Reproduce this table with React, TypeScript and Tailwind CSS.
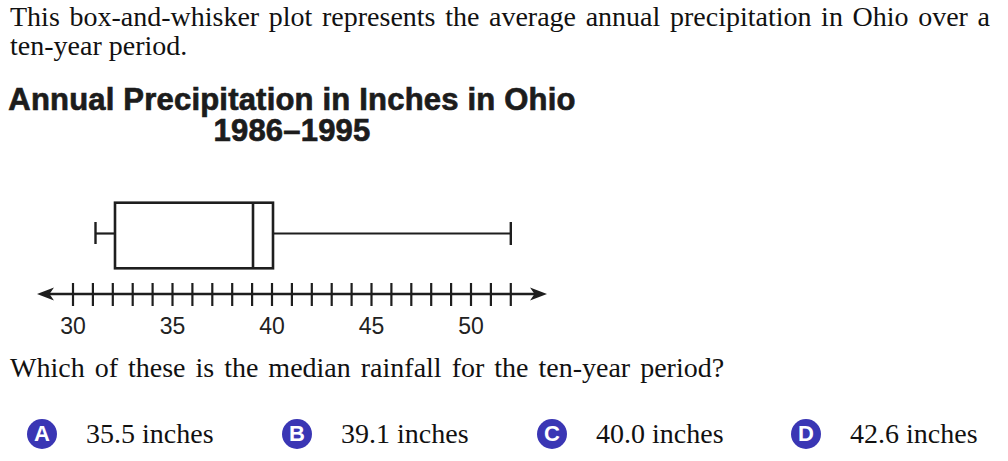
const ticks = Array.from({ length: 23 }, (_, i) => 73 + i * 19.9);
const labels = [30, 35, 40, 45, 50];

const choices = [
  { letter: "A", text: "35.5 inches" },
  { letter: "B", text: "39.1 inches" },
  { letter: "C", text: "40.0 inches" },
  { letter: "D", text: "42.6 inches" },
];

function BoxPlot() {
  return (
    <svg width="560" height="160" viewBox="0 0 560 160" className="block">
      <g stroke="#1e1e1e" fill="none">
        {/* whiskers */}
        <line x1="95.5" y1="32" x2="95.5" y2="54" strokeWidth="2.4" />
        <line x1="95.5" y1="43.5" x2="115" y2="43.5" strokeWidth="2.2" />
        <line x1="273" y1="43.5" x2="510.8" y2="43.5" strokeWidth="2.2" />
        <line x1="510.8" y1="32" x2="510.8" y2="55" strokeWidth="2.4" />
        {/* box */}
        <rect x="115" y="12.7" width="158" height="65.6" strokeWidth="2.6" />
        <line x1="253" y1="12.7" x2="253" y2="78.3" strokeWidth="2.6" />
        {/* axis */}
        <line x1="44" y1="104" x2="540" y2="104" strokeWidth="2.4" />
        {ticks.map((x) => (
          <line key={x} x1={x} y1="93" x2={x} y2="116" strokeWidth="2.2" />
        ))}
      </g>
      <path d="M37 104 L54 97.5 L49.5 104 L54 110.5 Z" fill="#1e1e1e" />
      <path d="M547 104 L530 97.5 L534.5 104 L530 110.5 Z" fill="#1e1e1e" />
      {labels.map((v) => (
        <text
          key={v}
          x={73 + (v - 30) * 19.9}
          y="143.5"
          textAnchor="middle"
          fontSize="23"
          fill="#222"
          fontFamily="'Liberation Sans', Arial, sans-serif"
        >
          {v}
        </text>
      ))}
    </svg>
  );
}

export default function App() {
  return (
    <div className="w-[1008px] h-[461px] overflow-hidden bg-white text-[#111] font-['Liberation_Serif','Times_New_Roman',serif]">
      <p className="pt-[2px] pl-[10px] pr-[18px] text-[28px] leading-[29px] text-justify">
        This box-and-whisker plot represents the average annual precipitation in Ohio over a ten-year period.
      </p>

      <div className="mt-[24px] w-[584px] text-center font-['Liberation_Sans',Arial,sans-serif] font-bold text-[31px] leading-[31px] tracking-[0.2px] text-[#1c1c1c] [-webkit-text-stroke:0.7px_#1c1c1c]">
        <div>Annual Precipitation in Inches in Ohio</div>
        <div>1986–1995</div>
      </div>

      <div className="mt-[44px]">
        <BoxPlot />
      </div>

      <p className="mt-[3px] pl-[10px] text-[28px] leading-[30px] [word-spacing:3px]">
        Which of these is the median rainfall for the ten-year period?
      </p>

      <div className="mt-[36px] pl-[27px] grid grid-cols-[255px_255px_254px_auto]">
        {choices.map((c) => (
          <div key={c.letter} className="flex items-center gap-[29px]">
            <span className="flex h-[30px] w-[30px] shrink-0 items-center justify-center rounded-full bg-[#3a36b4] font-['Liberation_Sans',Arial,sans-serif] text-[22px] font-bold leading-none text-white">
              {c.letter}
            </span>
            <span className="text-[28px] leading-[30px] whitespace-nowrap">
              {c.text}
            </span>
          </div>
        ))}
      </div>
    </div>
  );
}
